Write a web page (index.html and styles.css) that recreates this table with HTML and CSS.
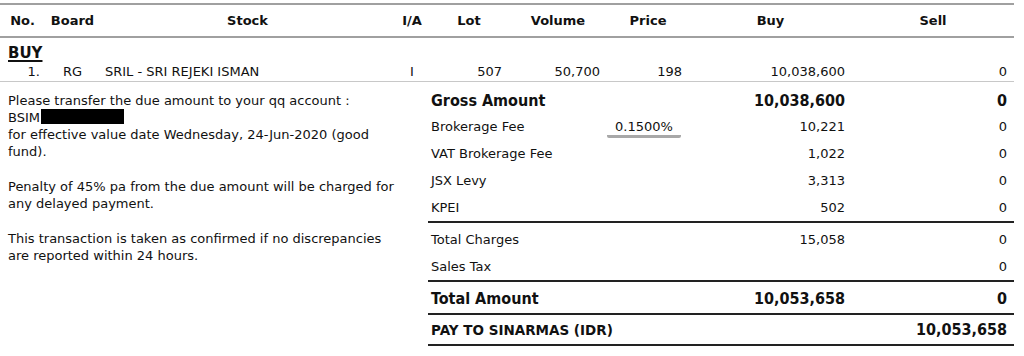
FILE: index.html
```html
<!DOCTYPE html>
<html>
<head>
<meta charset="utf-8">
<link rel="stylesheet" href="styles.css">
</head>
<body>
<div class="page">
  <div class="trades">
    <div class="row head">
      <div class="c">No.</div>
      <div class="c">Board</div>
      <div class="c">Stock</div>
      <div class="c">I/A</div>
      <div class="c">Lot</div>
      <div class="c">Volume</div>
      <div class="c">Price</div>
      <div class="c">Buy</div>
      <div class="c">Sell</div>
    </div>
    <div class="side">BUY</div>
    <div class="row data">
      <div class="r no">1.</div>
      <div class="c">RG</div>
      <div class="l stock">SRIL - SRI REJEKI ISMAN</div>
      <div class="c">I</div>
      <div class="r">507</div>
      <div class="r">50,700</div>
      <div class="r">198</div>
      <div class="r">10,038,600</div>
      <div class="r">0</div>
    </div>
  </div>

  <div class="summary">
    <div class="notes">
      <p>Please transfer the due amount to your qq account :<br>BSIM<span class="redact"></span><br>for effective value date Wednesday, 24-Jun-2020 (good<br>fund).</p>
      <p>Penalty of 45% pa from the due amount will be charged for<br>any delayed payment.</p>
      <p>This transaction is taken as confirmed if no discrepancies<br>are reported within 24 hours.</p>
    </div>
    <div class="totals">
      <div class="trow gross big">
        <div class="lab">Gross Amount</div>
        <div></div>
        <div class="val">10,038,600</div>
        <div class="val">0</div>
      </div>
      <div class="trow">
        <div class="lab">Brokerage Fee</div>
        <div class="rate"><span class="pct">0.1500%</span></div>
        <div class="val">10,221</div>
        <div class="val">0</div>
      </div>
      <div class="trow">
        <div class="lab">VAT Brokerage Fee</div>
        <div></div>
        <div class="val">1,022</div>
        <div class="val">0</div>
      </div>
      <div class="trow">
        <div class="lab">JSX Levy</div>
        <div></div>
        <div class="val">3,313</div>
        <div class="val">0</div>
      </div>
      <div class="trow ruled">
        <div class="lab">KPEI</div>
        <div></div>
        <div class="val">502</div>
        <div class="val">0</div>
      </div>
      <div class="trow charges">
        <div class="lab">Total Charges</div>
        <div></div>
        <div class="val">15,058</div>
        <div class="val">0</div>
      </div>
      <div class="trow ruled">
        <div class="lab">Sales Tax</div>
        <div></div>
        <div class="val"></div>
        <div class="val">0</div>
      </div>
      <div class="trow total big ruled">
        <div class="lab">Total Amount</div>
        <div></div>
        <div class="val">10,053,658</div>
        <div class="val">0</div>
      </div>
      <div class="trow pay ruled">
        <div class="lab paylab">PAY TO SINARMAS (IDR)</div>
        <div></div>
        <div class="val"></div>
        <div class="val payval">10,053,658</div>
      </div>
    </div>
  </div>
</div>
</body>
</html>
```

FILE: styles.css
```css
* { box-sizing: border-box; }

html, body {
  margin: 0;
  padding: 0;
  background: #fff;
}

body {
  font-family: "DejaVu Sans", "Liberation Sans", sans-serif;
  font-size: 13px;
  color: #111;
}

.page {
  width: 1014px;
  padding-top: 3px;
}

.trades {
  border-top: 2px solid #a0a0a0;
}

.row {
  display: grid;
  grid-template-columns: 45px 55px 295px 34px 80px 98px 82px 163px 162px;
  align-items: center;
}

.row .c { text-align: center; }
.row .r { text-align: right; padding-right: 7px; }
.row .l { text-align: left; }
.row .no { padding-right: 5px; }
.row .stock { padding-left: 5px; }

.head {
  height: 33px;
  font-weight: bold;
  border-bottom: 2px solid #a0a0a0;
}

.side {
  height: 24px;
  padding: 7px 0 0 8px;
  font-weight: bold;
  font-size: 15px;
  text-decoration: underline;
  text-decoration-thickness: 2px;
  text-underline-offset: 2px;
  line-height: 16px;
}

.data {
  height: 20px;
  border-bottom: 1px solid #c8c8c8;
}

.summary {
  display: flex;
}

.notes {
  width: 428px;
  padding: 10px 0 0 8px;
  line-height: 17px;
}

.notes p {
  margin: 0 0 18px 0;
}

.redact {
  display: inline-block;
  width: 83px;
  height: 15px;
  background: #000;
  vertical-align: -2px;
  margin-left: 1px;
}

.totals {
  width: 586px;
}

.trow {
  display: grid;
  grid-template-columns: 179px 82px 163px 162px;
  align-items: center;
  height: 27px;
}

.trow .lab { padding-left: 3px; }
.trow .val { text-align: right; padding-right: 7px; }
.trow .rate { text-align: center; padding-right: 17px; }

.pct {
  display: inline-block;
  padding: 0 8px 1px;
  border-bottom: 3px solid #a8a8a8;
  border-radius: 2px;
  line-height: 15px;
  margin-top: 4px;
}

.big {
  font-weight: bold;
  font-size: 16px;
  font-stretch: condensed;
  font-family: "DejaVu Sans Condensed", "DejaVu Sans", sans-serif;
}

.trow.gross {
  height: 31px;
  padding-top: 5px;
}

.trow.ruled {
  height: 29px;
  border-bottom: 2px solid #222;
}

.trow.charges {
  height: 30px;
  padding-top: 3px;
}

.trow.total {
  height: 33px;
  padding-top: 2px;
}

.trow.pay {
  height: 31px;
}

.paylab {
  font-weight: bold;
  font-size: 13.5px;
  white-space: nowrap;
}

.payval {
  font-weight: bold;
  font-size: 16px;
  font-stretch: condensed;
  font-family: "DejaVu Sans Condensed", "DejaVu Sans", sans-serif;
}
```
